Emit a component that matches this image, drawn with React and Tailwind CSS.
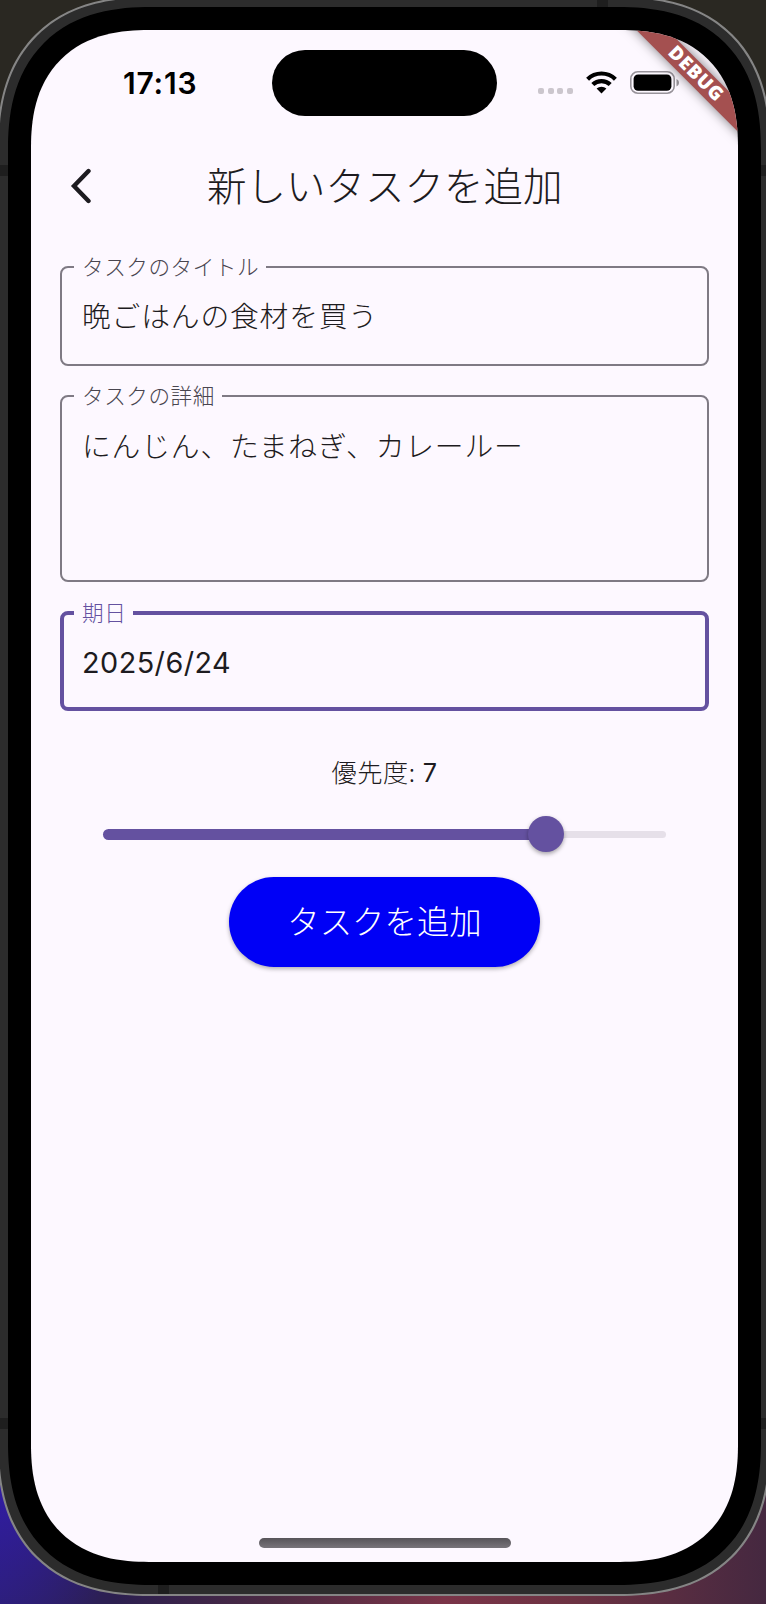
import React from "react";

function StatusBar() {
  return (
    <div className="flex h-[106px] shrink-0 items-start pt-5">
      <div className="ml-[92px] mt-[12px] w-[78px] font-['Inter',sans-serif] text-[30px] leading-[42px] font-semibold tracking-[0.8px] whitespace-nowrap text-black">
        17:13
      </div>
      <div className="ml-[71px] h-[66px] w-[225px] rounded-full bg-black" />
      <div className="mt-[37.5px] ml-[41px] flex gap-[3.6px]">
        <span className="size-[6px] rounded-[2px] bg-[#cbc6cd]" />
        <span className="size-[6px] rounded-[2px] bg-[#cbc6cd]" />
        <span className="size-[6px] rounded-[2px] bg-[#cbc6cd]" />
        <span className="size-[6px] rounded-[2px] bg-[#cbc6cd]" />
      </div>
      <svg className="mt-[21px] ml-[13px] h-[23px] w-[31px]" viewBox="0 0 31 23" fill="none" stroke="#000" strokeWidth="4.2">
        <path d="M1.6 8.2a19.8 19.8 0 0 1 27.8 0" />
        <path d="M6.8 13.6a12.4 12.4 0 0 1 17.4 0" />
        <path d="M15.5 22.5l-4.9-4.9a7.1 7.1 0 0 1 9.8 0z" fill="#000" stroke="none" />
      </svg>
      <svg className="mt-[21px] ml-[13px] h-[23px] w-[50px]" viewBox="0 0 50 23" fill="none">
        <rect x="0.8" y="0.8" width="43.4" height="21.4" rx="7" stroke="#98939a" strokeWidth="1.6" />
        <rect x="3.6" y="3.4" width="37.8" height="16.4" rx="4.5" fill="#000" />
        <path d="M46.5 8v7.4c1.6-.7 2.5-2 2.5-3.7s-.9-3-2.5-3.7z" fill="#98939a" />
      </svg>
    </div>
  );
}

function Field({ label, value, className, legendClassName }) {
  return (
    <fieldset className={"min-w-0 rounded-[8px] " + className}>
      <legend className={"h-7 pr-[7px] pl-2 text-[21.6px] leading-[26px] font-light tracking-[0.55px] whitespace-nowrap " + legendClassName}>
        {label}
      </legend>
      {value}
    </fieldset>
  );
}

function DebugBanner() {
  return (
    <div className="absolute top-[32px] left-[564px] flex h-[21.5px] w-[200px] rotate-45 items-center justify-center bg-[#a45050] pl-[3px] font-['Open_Sans',sans-serif] text-[19px] leading-none font-extrabold tracking-[0.8px] text-white shadow-[0_0_12px_rgba(0,0,0,0.5)]">
      DEBUG
    </div>
  );
}

function Screen() {
  return (
    <div className="relative flex h-[1532px] w-[707px] flex-col overflow-hidden rounded-[100px] supports-[corner-shape:superellipse(1.26)]:rounded-[118px] [corner-shape:superellipse(1.26)] bg-[#fdf8ff] text-[#1d1b20]">
      <StatusBar />
      <header className="flex h-[100px] shrink-0 items-center">
        <svg className="ml-[39px] h-[36px] w-[22px]" viewBox="0 0 22 36" fill="none" stroke="#1d1b20" strokeWidth="4.4" strokeLinecap="round" strokeLinejoin="miter">
          <path d="M18.5 3L4 18L18.5 33" />
        </svg>
        <h1 className="-mt-[5px] ml-[115px] text-[39.5px] leading-[56px] font-light whitespace-nowrap">新しいタスクを追加</h1>
      </header>
      <main className="flex flex-col px-[29px] pt-[17px]">
        <Field
          label="タスクのタイトル"
          value={<p className="-mt-[1px] pl-[20px] text-[28.8px] leading-[70px] font-light tracking-[0.8px]">晩ごはんの食材を買う</p>}
          className="h-[113px] border-2 border-[#7f7a84]"
          legendClassName="ml-[12px] text-[#49454f]"
        />
        <Field
          label="タスクの詳細"
          value={<p className="pl-[20px] text-[28.8px] leading-[70px] font-light tracking-[0.8px]">にんじん、たまねぎ、カレールー</p>}
          className="mt-[16px] h-[200px] border-2 border-[#7f7a84]"
          legendClassName="ml-[12px] text-[#49454f]"
        />
        <Field
          label="期日"
          value={<p className="pt-[1px] pl-[18px] font-['Inter',sans-serif] text-[28.8px] leading-[70px] tracking-[0.45px]">2025/6/24</p>}
          className="mt-[17px] h-[112px] border-4 border-[#6451a0]"
          legendClassName="ml-[10px] text-[#6451a0]"
        />
        <p className="mt-[42px] text-center text-[25.2px] leading-[36px] font-light tracking-[0.55px]">
          優先度: <span className="ml-px font-['Inter',sans-serif] font-normal">7</span>
        </p>
        <div className="mt-[25px] flex h-[36px] items-center pr-[43px] pl-[43px]">
          <div className="h-[11px] w-[427px] rounded-l-full bg-[#6451a0]" />
          <div className="z-10 -ml-[2px] size-[36px] shrink-0 rounded-full bg-[#6451a0] shadow-[0_2px_4px_rgba(0,0,0,0.35)]" />
          <div className="-ml-[4px] h-[7px] flex-1 rounded-r-full bg-[#e6e0e9]" />
        </div>
        <button className="mx-auto mt-[25px] flex h-[90px] w-[311px] items-center justify-center rounded-full bg-[#0000f6] pb-1 text-[32.4px] leading-[50px] font-light text-white shadow-[0_2px_4px_rgba(0,0,0,0.3)]">
          タスクを追加
        </button>
      </main>
      <div className="mx-auto mt-auto mb-[14px] h-[10px] w-[252px] rounded-full bg-linear-to-b from-[#575459] to-[#78747a]" />
      <DebugBanner />
    </div>
  );
}

export default function App() {
  return (
    <div className="relative h-[1604px] w-[766px] overflow-hidden bg-[#2a2822] font-['Noto_Sans_CJK_JP',sans-serif]">
      <div className="absolute bottom-0 left-0 h-[260px] w-full bg-[linear-gradient(90deg,#2c1f72_0%,#2c1f50_15%,#4c2a42_36%,#7a3448_58%,#6c3242_75%,#452840_100%)]" />
      <div className="absolute bottom-0 left-0 h-[170px] w-[120px] bg-[radial-gradient(ellipse_at_0%_20%,#311ca8,#2c1f6000_90%)]" />
      <div className="relative -mt-1 -ml-[3px] h-[1600px] w-[774px] rounded-[131px] supports-[corner-shape:superellipse(1.26)]:rounded-[153px] [corner-shape:superellipse(1.26)] border-2 border-[#858585] bg-[#2c2c2c] p-[9px]">
        <span className="absolute top-0 left-[598px] h-[9px] w-[11px] bg-[#1e1e1e]" />
        <span className="absolute bottom-0 left-[159px] h-[9px] w-[11px] bg-[#1e1e1e]" />
        <span className="absolute top-[167px] left-0 h-[11px] w-full bg-[#1e1e1e]" />
        <span className="absolute top-[1420px] left-0 h-[11px] w-full bg-[#1e1e1e]" />
        <div className="relative h-[1578px] w-[753px] rounded-[123px] supports-[corner-shape:superellipse(1.26)]:rounded-[143px] [corner-shape:superellipse(1.26)] bg-black px-[23px] py-[23px]">
          <Screen />
        </div>
      </div>
    </div>
  );
}
